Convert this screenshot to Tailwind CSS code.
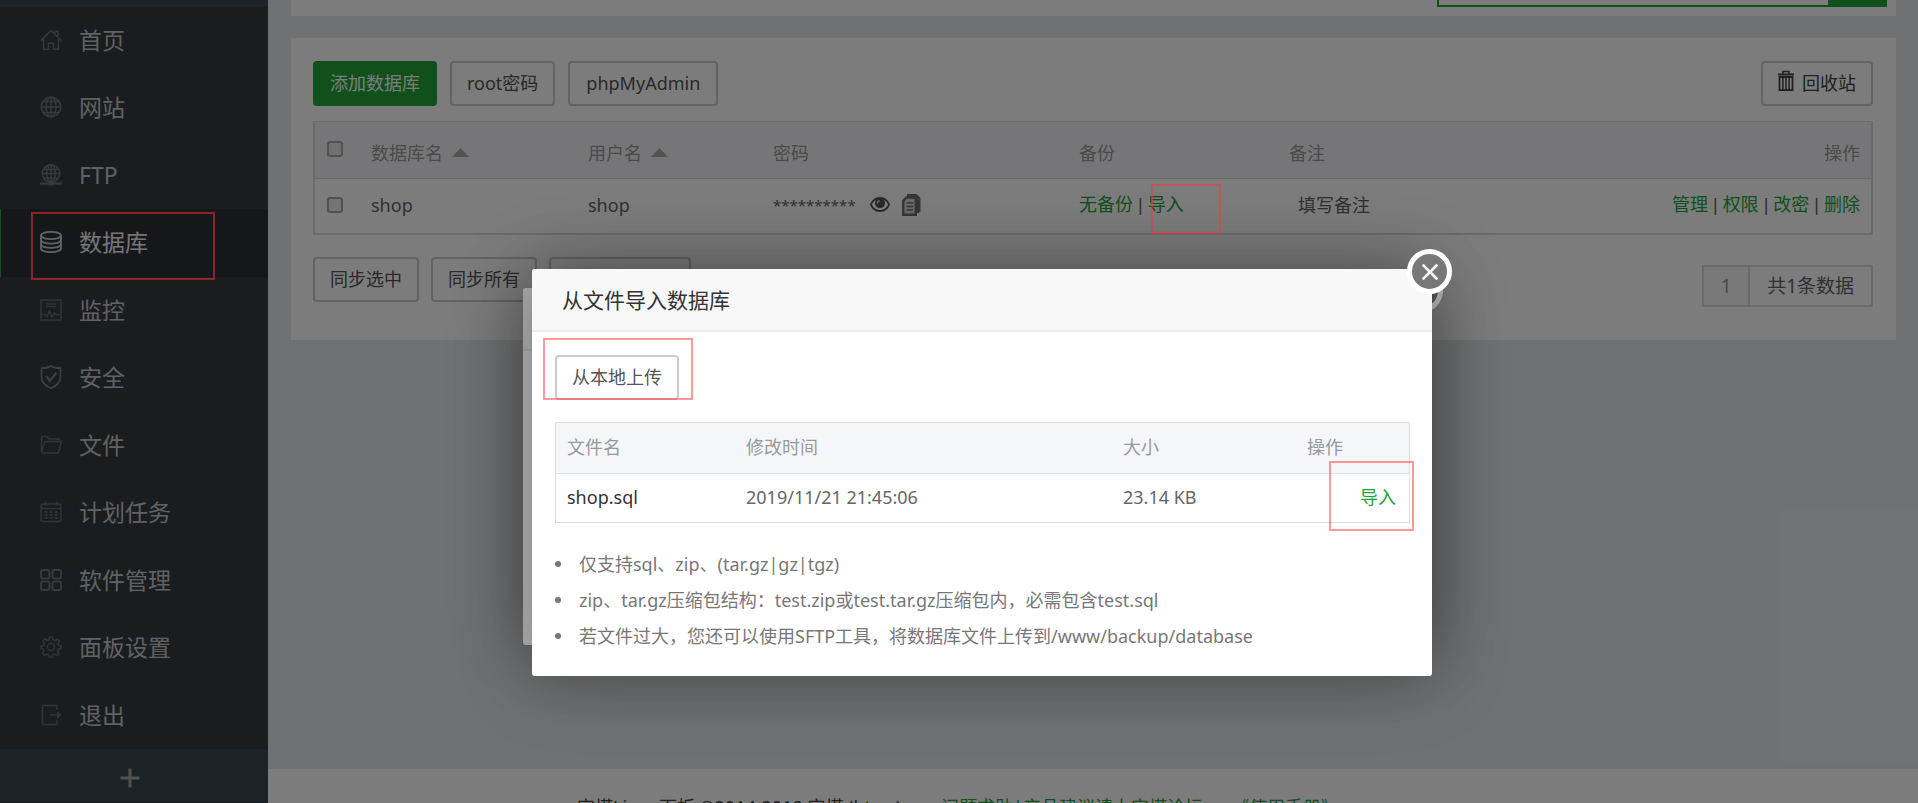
<!DOCTYPE html>
<html lang="zh-CN">
<head>
<meta charset="utf-8">
<title>数据库 - 宝塔Linux面板</title>
<script src="https://cdn.jsdelivr.net/npm/@tailwindcss/browser@4"></script>
</head>
<body class="relative h-screen overflow-hidden bg-[#e6e8eb] font-['Noto_Sans','Noto_Sans_CJK_SC',sans-serif] text-[18px] leading-6 text-[#666]">

<div class="flex h-full">
  <!-- Sidebar -->
  <nav class="flex w-[268px] shrink-0 flex-col bg-[#3c474d] pt-[7px] text-[23px] leading-8 text-[#c8c8c8]">
    <ul class="bg-[#373d44]">
      <li class="h-[67px] even:h-[68px]"><a href="#" class="flex h-full items-center gap-[17px] pb-0.5 pl-10">
        <svg class="size-[22px] text-[#737679]" viewBox="0 0 22 22" fill="none" stroke="currentColor" stroke-width="1.4"><path d="M1 11.500 11 1.500l10.500 10M3.500 10v10.300h5v-6h5v6h5V10M15 4V2.500h3V7"/></svg>首页</a></li>
      <li class="h-[67px] even:h-[68px]"><a href="#" class="flex h-full items-center gap-[17px] pb-0.5 pl-10">
        <svg class="size-[22px] text-[#737679]" viewBox="0 0 22 22" fill="none" stroke="currentColor" stroke-width="1.4"><circle cx="11" cy="11" r="9.800"/><ellipse cx="11" cy="11" rx="5" ry="9.800"/><path d="M11 1v20M1 11h20M3 5.500h16M3 16.500h16"/></svg>网站</a></li>
      <li class="h-[67px] even:h-[68px]"><a href="#" class="flex h-full items-center gap-[17px] pb-0.5 pl-10">
        <svg class="size-[22px] text-[#737679]" viewBox="0 0 22 22" fill="none" stroke="currentColor" stroke-width="1.500"><circle cx="11" cy="9.500" r="8.700"/><ellipse cx="11" cy="9.500" rx="4.200" ry="8.700"/><path d="M11 1v17M2.500 9.500h17M4 5.500h14M4 14h14"/><path d="M0 19.500h22" stroke-width="2.200"/><path d="M8.500 19.500h5" stroke-width="4"/></svg>FTP</a></li>
      <li class="h-[67px] even:h-[68px]"><a href="#" class="flex h-full items-center gap-[17px] border-l border-[#20a53a] bg-[#2d3138] pb-0.5 pl-[39px] text-[#f2f2f2]">
        <svg class="size-[22px] text-[#c8c8c8]" viewBox="0 0 22 22" fill="none" stroke="currentColor" stroke-width="1.900"><ellipse cx="11" cy="4.500" rx="10" ry="3.600"/><path d="M1 4.500v13c0 2 4.500 3.700 10 3.700s10-1.700 10-3.700v-13M1 9c0 2 4.500 3.600 10 3.600S21 11 21 9M1 13.300c0 2 4.500 3.600 10 3.600s10-1.600 10-3.600"/></svg>数据库</a></li>
      <li class="h-[67px] even:h-[68px]"><a href="#" class="flex h-full items-center gap-[17px] pb-0.5 pl-10">
        <svg class="size-[22px] text-[#65696d]" viewBox="0 0 22 22" fill="none" stroke="currentColor" stroke-width="1.500"><path d="M1 1h20v20H1zM6 5h10M6 7.500h10M1 15.500h4l2 2 2.500-5.500 2.500 6 2.500-4 1.500 1.500h5"/></svg>监控</a></li>
      <li class="h-[67px] even:h-[68px]"><a href="#" class="flex h-full items-center gap-[17px] pb-0.5 pl-10">
        <svg class="h-6 w-[22px] text-[#7f8285]" viewBox="0 0 22 22" preserveAspectRatio="none" fill="none" stroke="currentColor" stroke-width="1.700"><path d="M11 .8C8.500 2.300 5 2.800 1.500 2.800V11c0 4.500 4 8 9.500 10.300 5.500-2.300 9.500-5.800 9.500-10.300V2.800C17 2.800 13.500 2.300 11 .8z"/><path d="m6 10 4 4.500 6.500-7.500" stroke-width="2"/></svg>安全</a></li>
      <li class="h-[67px] even:h-[68px]"><a href="#" class="flex h-full items-center gap-[17px] pb-0.5 pl-10">
        <svg class="size-[22px] text-[#65696d]" viewBox="0 0 22 22" fill="none" stroke="currentColor" stroke-width="1.500"><path d="M1.500 18V3.500C1.500 3 2 2.500 2.500 2.500H7l2 2.500h9.500c.6 0 1 .4 1 1v1.500M1.500 18.500 4.500 8.500c.2-.6.600-1 1.200-1H21.500l-3 10.500c-.2.700-.6 1-1.200 1H2.500c-.6 0-1-.4-1-1z"/></svg>文件</a></li>
      <li class="h-[67px] even:h-[68px]"><a href="#" class="flex h-full items-center gap-[17px] pb-0.5 pl-10">
        <svg class="size-[22px] text-[#65696d]" viewBox="0 0 22 22" fill="none" stroke="currentColor" stroke-width="1.500"><rect x="1" y="3" width="20" height="17.500" rx="2"/><path d="M1 7.500h20M5.500.5v4M16.500.5v4"/><path d="M4.500 11h3m2 0h3m2 0h3M4.500 14h3m2 0h3m2 0h3M4.500 17h3m2 0h3m2 0h3" stroke-width="1.800"/></svg>计划任务</a></li>
      <li class="h-[67px] even:h-[68px]"><a href="#" class="flex h-full items-center gap-[17px] pb-0.5 pl-10">
        <svg class="size-[22px] text-[#737679]" viewBox="0 0 22 22" fill="none" stroke="currentColor" stroke-width="1.900"><rect x="1" y="1" width="8.500" height="8.500" rx="2"/><rect x="12.500" y="1" width="8.500" height="8.500" rx="2"/><rect x="1" y="12.500" width="8.500" height="8.500" rx="2"/><rect x="12.500" y="12.500" width="8.500" height="8.500" rx="2"/></svg>软件管理</a></li>
      <li class="h-[67px] even:h-[68px]"><a href="#" class="flex h-full items-center gap-[17px] pb-0.5 pl-10">
        <svg class="size-[22px] text-[#65696d]" viewBox="0 0 22 22" fill="none" stroke="currentColor" stroke-width="1.600" stroke-linejoin="round"><circle cx="11" cy="11" r="3.600"/><path d="M9.500 1h3l.6 2.700 2 .9 2.400-1.500 2 2-1.400 2.400.8 2L21 10v2.500l-2.600.6-.8 2 1.400 2.400-2 2-2.400-1.400-2 .8-.6 2.600H9.500l-.6-2.600-2-.8-2.400 1.400-2-2 1.400-2.400-.8-2L1 12.500V10l2.600-.5.800-2L3 5l2-2 2.400 1.500 1.600-.8z"/></svg>面板设置</a></li>
      <li class="h-[67px] even:h-[68px]"><a href="#" class="flex h-full items-center gap-[17px] pb-0.5 pl-10">
        <svg class="size-[22px] text-[#65696d]" viewBox="0 0 22 22" fill="none" stroke="currentColor" stroke-width="1.600"><path d="M17 6V2.500c0-.6-.4-1-1-1H3.500c-.6 0-1 .4-1 1v17c0 .6.4 1 1 1H16c.6 0 1-.4 1-1V16M9 11h11"/><path d="m17 7 4.500 4L17 15z" fill="currentColor" stroke="none"/></svg>退出</a></li>
    </ul>
    <button type="button" aria-label="添加菜单" class="flex h-[53px] items-center justify-center pt-1 pr-2">
      <svg class="size-5 text-[#a8a8a8]" viewBox="0 0 20 20" fill="none" stroke="currentColor" stroke-width="3"><path d="M10 .5v19M.5 10h19"/></svg>
    </button>
    <div class="flex-1 bg-[#373d44]"></div>
  </nav>

  <!-- Content -->
  <div class="flex min-w-0 flex-1 flex-col">
    <main class="flex-1 pr-[22px] pl-[23px]">
      <div class="flex h-4 items-start justify-end bg-white pr-[9px]">
        <div class="flex h-[7px] w-[450px]">
          <div class="flex-1 border-b-2 border-l-2 border-[#20a53a]"></div>
          <div class="w-[59px] bg-[#20a53a]"></div>
        </div>
      </div>

      <section class="mt-[22px] bg-white pt-[23px] pr-[23px] pb-[33px] pl-[22px]">
        <div class="flex items-center gap-[13px]">
          <button type="button" class="h-[45px] rounded bg-[#20a53a] px-[17px] pb-0.5 text-white">添加数据库</button>
          <button type="button" class="h-[45px] rounded border-2 border-[#ccc] px-[15px] pb-0.5 text-[#555]">root密码</button>
          <button type="button" class="h-[45px] rounded border-2 border-[#ccc] px-4 pb-0.5 text-[#555]">phpMyAdmin</button>
          <button type="button" class="ml-auto flex h-[45px] items-center gap-2 rounded border-2 border-[#ccc] px-[15px] pb-0.5 text-[#444]">
            <svg class="mb-1 h-[21px] w-4" viewBox="0 0 16 21" fill="none" stroke="currentColor"><path d="M0 4.500h16" stroke-width="2"/><path d="M5 4V1.500h6V4" stroke-width="1.500"/><path d="M1.500 7h13v13.200h-13z" stroke-width="1.800"/><path d="M4.900 7v13M8 7v13M11.100 7v13" stroke-width="1.500"/></svg>回收站</button>
        </div>

        <div class="mt-[15px] border-2 border-t border-[#ddd]">
          <table class="w-full table-fixed border-collapse text-left">
            <colgroup><col class="w-[44px]"><col class="w-[217px]"><col class="w-[185px]"><col class="w-[306px]"><col class="w-[210px]"><col class="w-[240px]"><col></colgroup>
            <thead class="bg-[#f4f4f8] text-[#999]">
              <tr class="h-14 border-b border-[#ddd]">
                <th class="pb-0.5 pl-3"><input type="checkbox" aria-label="全选" class="block size-4 appearance-none rounded-[3px] border-2 border-[#a8a8a8] bg-[#e8e8e8]"></th>
                <th class="pt-1.5 pl-3 font-normal"><span class="flex items-center gap-[9px]">数据库名<svg class="h-[9px] w-[17px]" viewBox="0 0 17 9" fill="#aaa"><path d="M8.500 0 17 9H0z"/></svg></span></th>
                <th class="pt-1.5 pl-3 font-normal"><span class="flex items-center gap-[9px]">用户名<svg class="h-[9px] w-[17px]" viewBox="0 0 17 9" fill="#aaa"><path d="M8.500 0 17 9H0z"/></svg></span></th>
                <th class="pt-1.5 pl-3 font-normal">密码</th>
                <th class="pt-1.5 pl-3 font-normal">备份</th>
                <th class="pt-1.5 pl-3 font-normal">备注</th>
                <th class="pt-1.5 pr-[11px] text-right font-normal">操作</th>
              </tr>
            </thead>
            <tbody>
              <tr class="h-[55px]">
                <td class="pb-0.5 pl-3"><input type="checkbox" aria-label="选择 shop" class="block size-4 appearance-none rounded-[3px] border-2 border-[#a8a8a8] bg-[#f0f0f0]"></td>
                <td class="pb-0.5 pl-3">shop</td>
                <td class="pb-0.5 pl-3">shop</td>
                <td class="pb-0.5 pl-3"><span class="flex items-center"><span class="text-[15px]">**********</span>
                  <button type="button" aria-label="显示密码" class="ml-[14px]"><svg class="h-[15px] w-5" viewBox="0 0 20 15"><path fill="#555" fill-rule="evenodd" d="M10 0c5 0 8.600 3.500 10 7.500C18.600 11.500 15 15 10 15S1.400 11.500 0 7.500C1.400 3.500 5 0 10 0zM6 2.800C4 3.800 2.700 5.500 2 7.500 3.200 10.700 6 13 10 13s6.800-2.300 8-5.500c-.7-2-2-3.700-4-4.700.6 1 1 2.100 1 3.400a5 5 0 0 1-10 0c0-1.300.4-2.400 1-3.400z"/><path fill="none" stroke="#ddd" stroke-width="1.300" d="M7.300 6.500c0-1.600 1-2.600 2.500-2.800"/></svg></button>
                  <button type="button" aria-label="复制密码" class="ml-3"><svg class="h-[22px] w-[19px]" viewBox="0 0 19 22" fill="none"><path d="M5 0h9.500L18.500 4v13.500l-2 1.500H5z" fill="#707070"/><path d="M14 1v4h4" stroke="#999" stroke-width="1"/><path d="M4.500 3.500h9.300v17.300H1.200V7z" fill="#d8d8d8" stroke="#707070" stroke-width="2.400"/><path d="M4.500 9h6.500M4.500 12.500h6.500M4.500 16h6.500" stroke="#707070" stroke-width="1.600"/></svg></button></span></td>
                <td class="pb-0.5 pl-3 font-['Liberation_Sans','Noto_Sans_CJK_SC',sans-serif]"><a href="#" class="text-[#20a53a]">无备份</a> | <a href="#" class="text-[#20a53a]">导入</a></td>
                <td class="pb-0.5 pl-[21px]">填写备注</td>
                <td class="pr-[11px] pb-0.5 text-right font-['Liberation_Sans','Noto_Sans_CJK_SC',sans-serif]"><a href="#" class="text-[#20a53a]">管理</a> | <a href="#" class="text-[#20a53a]">权限</a> | <a href="#" class="text-[#20a53a]">改密</a> | <a href="#" class="text-[#20a53a]">删除</a></td>
              </tr>
            </tbody>
          </table>
        </div>

        <div class="mt-[22px] flex items-start gap-3">
          <button type="button" class="h-[45px] rounded border-2 border-[#ccc] px-[15px] pb-0.5 text-[#555]">同步选中</button>
          <button type="button" class="h-[45px] rounded border-2 border-[#ccc] px-[15px] pb-0.5 text-[#555]">同步所有</button>
          <button type="button" class="h-[45px] rounded border-2 border-[#ccc] px-[15px] pb-0.5 text-[#555]">从服务器获取</button>
          <div class="mt-2 ml-auto flex h-[42px] border-2 border-[#ddd] text-[19px]">
            <span class="flex w-[46px] items-center justify-center border-r-2 border-[#ddd] bg-[#f9f9f9] text-[#999]">1</span>
            <span class="flex items-center px-[17px]">共1条数据</span>
          </div>
        </div>
      </section>
    </main>

    <footer class="flex h-[34px] items-start justify-center overflow-hidden bg-white pt-[26px] pr-[270px] text-[#444]">
      <span>宝塔Linux面板 ©2014-2018 宝塔 (bt.cn)</span>
      <a href="#" class="ml-10 text-[#20a53a]">问题求助|产品建议请上宝塔论坛</a>
      <a href="#" class="ml-7 text-[#20a53a]">《使用手册》</a>
    </footer>
  </div>
</div>

<!-- Backup list dialog, behind the import dialog -->
<div class="absolute inset-0 bg-black/30"></div>
<div class="absolute top-[288px] left-[523px] h-[357px] w-[900px] rounded-[3px] bg-white shadow-[1px_1px_75px_rgba(0,0,0,0.3)]">
  <div class="h-[63px] rounded-t-[3px] border-b-2 border-[#eee] bg-[#f8f8f8]"></div>
  <div class="absolute -top-5 -right-5 size-[45px] rounded-full border-5 border-white bg-[#787878]"></div>
</div>

<!-- Import dialog -->
<div class="absolute inset-0 bg-black/30"></div>
<div role="dialog" aria-labelledby="dlg-title" class="absolute top-[269px] left-[532px] w-[900px] rounded-[3px] bg-white shadow-[1px_1px_75px_rgba(0,0,0,0.3)]">
  <h2 id="dlg-title" class="flex h-[63px] items-center rounded-t-[3px] border-b-2 border-[#eee] bg-[#f8f8f8] pl-[30px] text-[21px] text-[#333]">从文件导入数据库</h2>
  <div class="pt-[23px] pr-[22px] pb-[22px] pl-[23px]">
    <button type="button" class="block h-[45px] rounded border-2 border-[#ccc] px-[15px] pb-0.5 text-[#555]">从本地上传</button>
    <div class="mt-[22px] border border-[#ddd]">
      <table class="w-full table-fixed border-collapse text-left">
        <colgroup><col class="w-[179px]"><col class="w-[377px]"><col class="w-[184px]"><col></colgroup>
        <thead class="bg-[#f5f6fa] text-[#999]">
          <tr class="h-[50px] border-b border-[#dde4e6]"><th class="pb-0.5 pl-[11px] font-normal">文件名</th><th class="pb-0.5 pl-[11px] font-normal">修改时间</th><th class="pb-0.5 pl-[11px] font-normal">大小</th><th class="pb-0.5 pl-[11px] font-normal">操作</th></tr>
        </thead>
        <tbody>
          <tr class="h-[49px]"><td class="pb-0.5 pl-[11px] text-[#333]">shop.sql</td><td class="pb-0.5 pl-[11px]">2019/11/21 21:45:06</td><td class="pb-0.5 pl-[11px]">23.14 KB</td><td class="pr-[13px] pb-0.5 text-right"><a href="#" class="text-[#20a53a]">导入</a></td></tr>
        </tbody>
      </table>
    </div>
    <ul class="mt-[23px] text-[#777] leading-9">
      <li class="flex items-center gap-[18px]"><span class="size-[6px] rounded-full bg-[#777]"></span>仅支持sql、zip、(tar.gz|gz|tgz)</li>
      <li class="flex items-center gap-[18px]"><span class="size-[6px] rounded-full bg-[#777]"></span>zip、tar.gz压缩包结构：test.zip或test.tar.gz压缩包内，必需包含test.sql</li>
      <li class="flex items-center gap-[18px]"><span class="size-[6px] rounded-full bg-[#777]"></span>若文件过大，您还可以使用SFTP工具，将数据库文件上传到/www/backup/database</li>
    </ul>
  </div>
  <button type="button" aria-label="关闭" class="absolute -top-5 -right-5 flex size-[45px] items-center justify-center rounded-full border-5 border-white bg-[#787878]">
    <svg class="size-4" viewBox="0 0 16 16" stroke="#fff" stroke-width="2.600" stroke-linecap="round"><path d="m1.500 1.500 13 13M14.500 1.500l-13 13"/></svg>
  </button>
</div>

<!-- Step highlights -->
<div class="pointer-events-none absolute top-[212px] left-[31px] h-[68px] w-[184px] border-2 border-[#ff3333]/50"></div>
<div class="pointer-events-none absolute top-[184px] left-[1151px] h-[50px] w-[70px] border-2 border-[#ff3333]/50"></div>
<div class="pointer-events-none absolute top-[338px] left-[543px] h-[62px] w-[150px] border-2 border-[#ff3333]/50"></div>
<div class="pointer-events-none absolute top-[461px] left-[1329px] h-[70px] w-[85px] border-2 border-[#ff3333]/50"></div>
</body>
</html>
